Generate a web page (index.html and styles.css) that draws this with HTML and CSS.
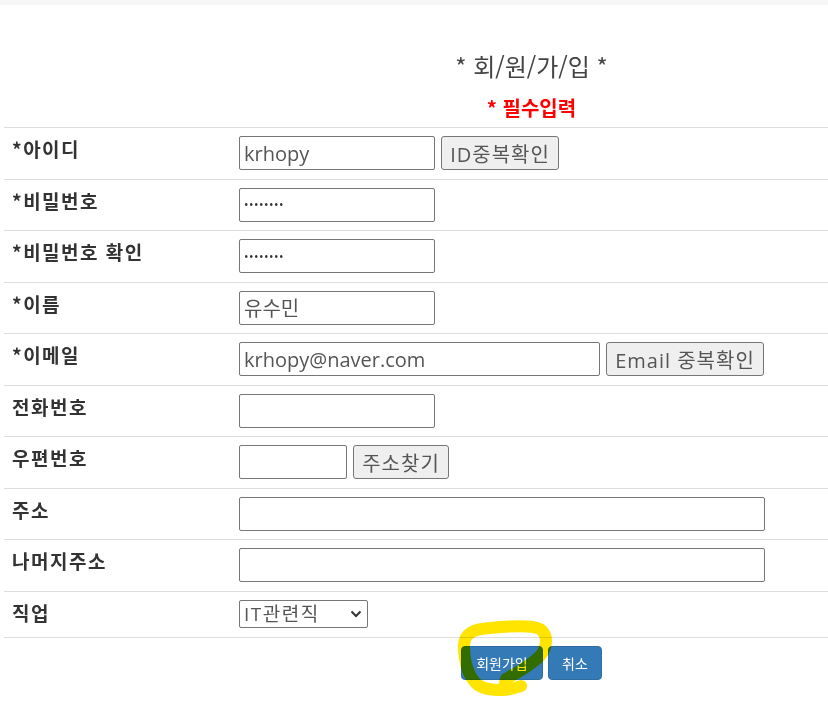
FILE: index.html
```html
<!DOCTYPE html>
<html lang="ko">
<head>
<meta charset="utf-8">
<title>회원가입</title>
<link rel="stylesheet" href="styles.css">
</head>
<body>
<div class="topbar"></div>
<div class="page">
  <div class="head">
    <h2 class="title">* 회/원/가/입 *</h2>
    <p class="req">* 필수입력</p>
  </div>
  <table class="form">
    <colgroup><col class="col-label"><col></colgroup>
    <tr>
      <th>*아이디</th>
      <td><input class="inp w-id" type="text" value="krhopy"><button class="btn-gray b-id" type="button">ID중복확인</button></td>
    </tr>
    <tr>
      <th>*비밀번호</th>
      <td><input class="inp w-id pw" type="password" value="12345678"></td>
    </tr>
    <tr>
      <th>*비밀번호 확인</th>
      <td><input class="inp w-id pw" type="password" value="12345678"></td>
    </tr>
    <tr>
      <th>*이름</th>
      <td><input class="inp w-id" type="text" value="유수민"></td>
    </tr>
    <tr>
      <th>*이메일</th>
      <td><input class="inp w-mail" type="text" value="krhopy@naver.com"><button class="btn-gray b-mail" type="button">Email 중복확인</button></td>
    </tr>
    <tr>
      <th>전화번호</th>
      <td><input class="inp w-id" type="text"></td>
    </tr>
    <tr>
      <th>우편번호</th>
      <td><input class="inp w-zip" type="text"><button class="btn-gray b-zip" type="button">주소찾기</button></td>
    </tr>
    <tr>
      <th>주소</th>
      <td><input class="inp w-addr" type="text"></td>
    </tr>
    <tr>
      <th>나머지주소</th>
      <td><input class="inp w-addr" type="text"></td>
    </tr>
    <tr class="row-job">
      <th>직업</th>
      <td>
        <div class="select">
          <span class="select-text">IT관련직</span>
          <svg class="chev" width="12" height="8" viewBox="0 0 12 8"><path d="M1.5 1.5 L6 6 L10.5 1.5" fill="none" stroke="#333" stroke-width="2"/></svg>
        </div>
      </td>
    </tr>
    <tr class="row-actions">
      <td colspan="2">
        <div class="actions">
          <button class="btn-primary b-join" type="button">회원가입</button>
          <button class="btn-primary b-cancel" type="button">취소</button>
        </div>
      </td>
    </tr>
  </table>
</div>
<svg class="marker" width="828" height="720" viewBox="0 0 828 720">
  <path d="M521 686 C505 692 488 691 478 685 C468 677 464 661 464 646 C464 633 474 629 490 628 C510 626 532 625 540 629 C549 635 547 648 540 656 C530 666 515 674 506 679 L505 683" fill="none" stroke="#ffe400" stroke-width="12" stroke-linecap="round" stroke-linejoin="round"/>
</svg>
</body>
</html>
```
FILE: styles.css
```css
html, body {
  margin: 0;
  padding: 0;
  overflow: hidden;
  background: #fff;
}
body {
  position: relative;
  width: 828px;
  height: 720px;
  font-family: "Open Sans", "Noto Sans CJK KR", sans-serif;
  color: #333;
}
.topbar {
  height: 5px;
  background: #f7f7f7;
}
.page {
  width: 1055px;
  margin-left: 4px;
}
.head {
  padding-top: 48px;
  text-align: center;
}
.title {
  margin: 0;
  font-family: "Noto Sans CJK KR", sans-serif;
  font-weight: 400;
  font-size: 24px;
  line-height: 26px;
  color: #444;
}
.req {
  margin: 15px 0 5px;
  font-family: "Noto Sans CJK KR", sans-serif;
  font-weight: 700;
  font-size: 20px;
  line-height: 28px;
  color: #f00;
}
.form {
  width: 1055px;
  border-collapse: collapse;
  table-layout: fixed;
}
.col-label { width: 227px; }
.form th, .form td {
  border-top: 1px solid #ddd;
  padding: 8px 8px 8.5px;
  vertical-align: top;
  text-align: left;
}
.form th {
  font-family: "Noto Sans CJK KR", sans-serif;
  font-weight: 700;
  font-size: 19px;
  line-height: 26px;
  letter-spacing: 1.5px;
  color: #333;
}
.form td {
  font-size: 0;
  line-height: 0;
}
.inp {
  box-sizing: border-box;
  height: 34px;
  margin: 0;
  padding: 0 4px;
  border: 1px solid #767676;
  border-radius: 2px;
  font-family: "Open Sans", "Noto Sans CJK KR", sans-serif;
  font-size: 20px;
  color: #555;
  vertical-align: top;
  background: #fff;
}
.pw {
  font-size: 12px;
  letter-spacing: 0.5px;
  color: #333;
}
.w-id { width: 196px; }
.w-mail { width: 361px; }
.w-zip { width: 108px; }
.w-addr { width: 526px; }
.btn-gray {
  box-sizing: border-box;
  height: 34px;
  margin: 0 0 0 6px;
  padding: 0;
  border: 1px solid #767676;
  border-radius: 3px;
  background: #efefef;
  font-family: "Open Sans", "Noto Sans CJK KR", sans-serif;
  font-size: 20px;
  letter-spacing: 1px;
  color: #555;
  vertical-align: top;
}
.b-id { width: 118px; }
.b-mail { width: 158px; }
.b-zip { width: 96px; }
.select {
  box-sizing: border-box;
  display: inline-flex;
  align-items: center;
  justify-content: space-between;
  width: 129px;
  height: 28px;
  padding: 0 5px 0 4px;
  border: 1px solid #767676;
  border-radius: 2px;
  background: #fff;
}
.select-text {
  font-family: "Open Sans", "Noto Sans CJK KR", sans-serif;
  font-size: 19px;
  line-height: 26px;
  letter-spacing: 1.5px;
  color: #555;
}
.chev { display: block; }
.row-job td, .row-job th { padding-bottom: 9px; }
.row-actions td {
  padding-top: 8px;
}
.actions {
  display: flex;
  justify-content: center;
  gap: 5px;
}
.btn-primary {
  box-sizing: border-box;
  height: 34px;
  margin: 0;
  padding: 0;
  border: 1px solid #2e6da4;
  border-radius: 4px;
  background: #337ab7;
  color: #fff;
  font-family: "Noto Sans CJK KR", sans-serif;
  font-size: 14px;
  line-height: 20px;
}
.b-join { width: 82px; }
.b-cancel { width: 54px; }
.marker {
  position: absolute;
  left: 0;
  top: 0;
  pointer-events: none;
  mix-blend-mode: multiply;
}
```
